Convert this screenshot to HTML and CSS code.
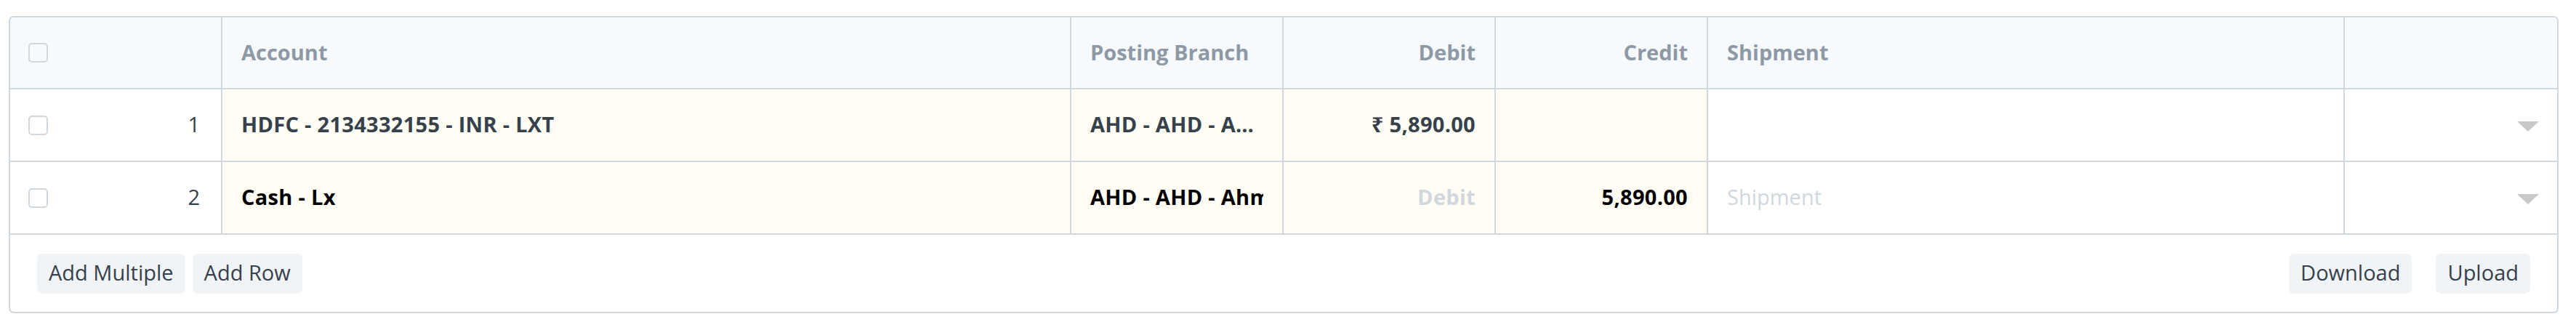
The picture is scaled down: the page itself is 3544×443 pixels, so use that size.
FILE: index.html
```html
<!DOCTYPE html>
<html lang="en">
<head>
  <meta charset="UTF-8" />
  <meta name="viewport" content="width=device-width, initial-scale=1.0">
  <title>Accounts</title>
  <link rel="stylesheet" href="styles.css">
</head>
<body>

  <div class="page">
    <div class="grid">

      <div class="grid-row grid-head">
        <div class="cell cell-index"><span class="check"></span></div>
        <div class="cell">Account</div>
        <div class="cell">Posting Branch</div>
        <div class="cell right">Debit</div>
        <div class="cell right">Credit</div>
        <div class="cell">Shipment</div>
        <div class="cell"></div>
      </div>

      <div class="grid-row">
        <div class="cell cell-index"><span class="check"></span><span class="num">1</span></div>
        <div class="cell editable bold">HDFC - 2134332155 - INR - LXT</div>
        <div class="cell editable bold"><span class="ellipsis">AHD - AHD - Ahmedabad</span></div>
        <div class="cell editable bold right">₹ 5,890.00</div>
        <div class="cell editable right"></div>
        <div class="cell"></div>
        <div class="cell cell-menu"><span class="caret"></span></div>
      </div>

      <div class="grid-row editing">
        <div class="cell cell-index"><span class="check"></span><span class="num">2</span></div>
        <div class="cell editable bold">Cash - Lx</div>
        <div class="cell editable bold"><span class="clip">AHD - AHD - Ahmedabad</span></div>
        <div class="cell editable bold right placeholder">Debit</div>
        <div class="cell editable bold right">5,890.00</div>
        <div class="cell placeholder">Shipment</div>
        <div class="cell cell-menu"><span class="caret"></span></div>
      </div>

      <div class="grid-footer">
        <div class="btn-group">
          <button class="btn">Add Multiple</button>
          <button class="btn">Add Row</button>
        </div>
        <div class="btn-group wide">
          <button class="btn">Download</button>
          <button class="btn">Upload</button>
        </div>
      </div>

    </div>
  </div>

</body>
</html>
```

FILE: styles.css
```css
* {
  box-sizing: border-box;
}
body {
  margin: 0;
  font-family: "Open Sans", "Noto Sans", sans-serif;
  font-size: 29px;
  color: #36414c;
  background: #fff;
}

.page {
  padding: 22px 24px 0 12px;
}

.grid {
  border: 2px solid #d1d8dd;
  border-radius: 7px;
  overflow: hidden;
}

.grid-row {
  display: grid;
  grid-template-columns: 1fr 4fr 1fr 1fr 1fr 3fr 1fr;
  height: 100px;
  border-bottom: 2px solid #d1d8dd;
}

.grid-head {
  height: 99px;
  background: #f7fafc;
  color: #8d99a6;
  font-weight: 700;
}

.cell {
  display: flex;
  align-items: center;
  padding: 0 26px 3px;
  border-right: 2px solid #d1d8dd;
  white-space: nowrap;
  overflow: hidden;
  min-width: 0;
}
.cell:last-child {
  border-right: none;
}
.cell.right {
  justify-content: flex-end;
}
.editable {
  background: #fffdf4;
}
.bold {
  font-weight: 700;
  letter-spacing: 0.3px;
}
.editing .bold {
  color: #000;
}
.editing .placeholder,
.placeholder {
  color: #d1d8dd;
}

.cell-index {
  padding: 0 29px 0 25px;
  justify-content: space-between;
}
.check {
  width: 27px;
  height: 27px;
  border: 2px solid #d1d8dd;
  border-radius: 5px;
  background: #fff;
}
.grid-head .check {
  background: transparent;
}
.num {
  font-weight: 400;
  margin-bottom: 3px;
}

.ellipsis {
  overflow: hidden;
  text-overflow: ellipsis;
}
.clip {
  overflow: hidden;
}

.cell-menu {
  justify-content: flex-end;
  padding-right: 25px;
}
.caret {
  width: 0;
  height: 0;
  border-left: 15px solid transparent;
  border-right: 15px solid transparent;
  border-top: 14px solid #c8c8c8;
  margin-top: 7px;
}

.grid-footer {
  display: flex;
  justify-content: space-between;
  align-items: center;
  height: 106px;
  padding: 0 37px;
}
.btn-group {
  display: flex;
  gap: 10px;
}
.btn-group.wide {
  gap: 33px;
}
.btn {
  height: 55px;
  padding: 0 16px 3px;
  border: none;
  border-radius: 7px;
  background: #f0f4f7;
  color: #36414c;
  font-family: inherit;
  font-size: 29px;
}
```
